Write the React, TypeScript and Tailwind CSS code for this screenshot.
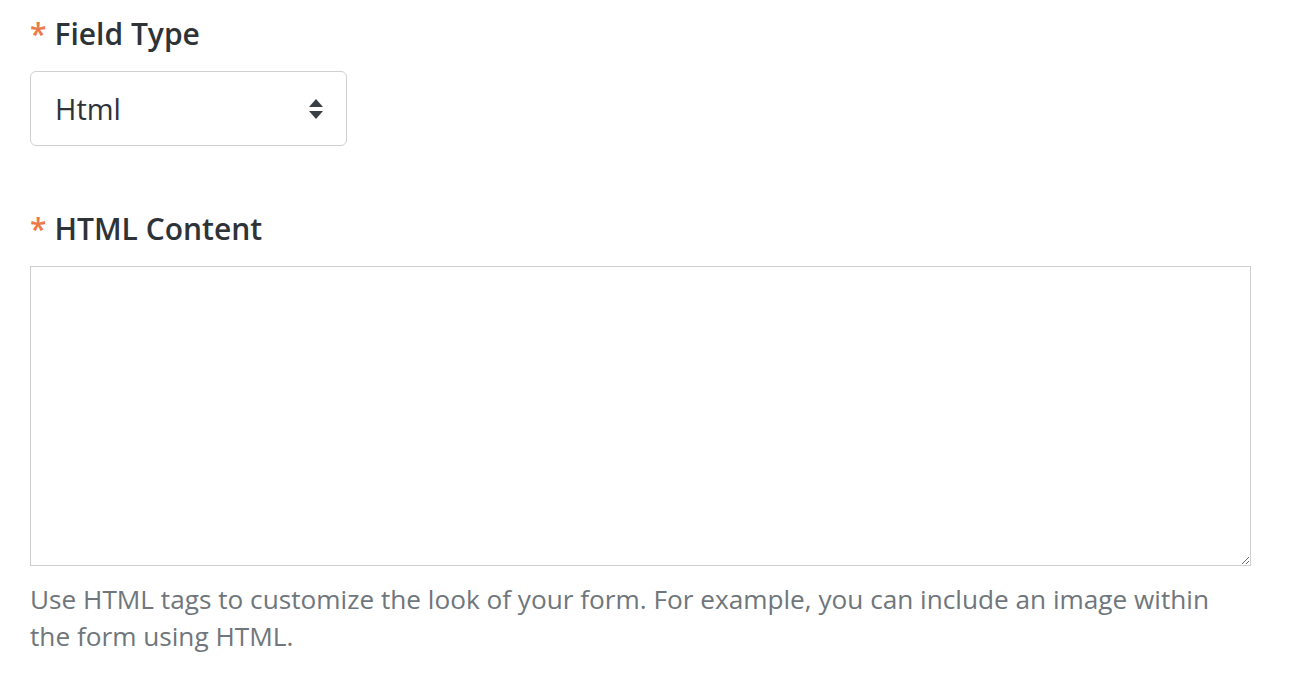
export default function App() {
  return (
    <div className="min-h-screen bg-white px-[30px] pt-[14px] font-['Open_Sans',sans-serif]">
      <div className="w-[1221px]">
        <label className="flex items-center text-[30px] font-semibold leading-[40px] text-[#2e3338]">
          <span className="mr-[8px] text-[#ec7a47]">*</span>
          Field Type
        </label>
        <div className="mt-[17px] flex h-[75px] w-[317px] items-center justify-between rounded-[6px] border border-[#d0d0d0] pl-[24px] pr-[22px]">
          <span className="text-[29px] text-[#2e3338]">Html</span>
          <svg width="16" height="22" viewBox="0 0 16 22" className="text-[#3a3f44]">
            <path d="M8 1 L15 9 L1 9 Z" fill="currentColor" />
            <path d="M1 13 L15 13 L8 21 Z" fill="currentColor" />
          </svg>
        </div>

        <label className="mt-[63px] flex items-center text-[30px] font-semibold leading-[40px] text-[#2e3338]">
          <span className="mr-[8px] text-[#ec7a47]">*</span>
          HTML Content
        </label>
        <textarea className="mt-[17px] block h-[300px] w-full border border-[#cfcfcf] p-3 text-[20px] outline-none" />
        <p className="mt-[15px] text-[26.2px] leading-[37px] text-[#6f767c]">
          Use HTML tags to customize the look of your form. For example, you can include an image within the form using HTML.
        </p>
      </div>
    </div>
  )
}
